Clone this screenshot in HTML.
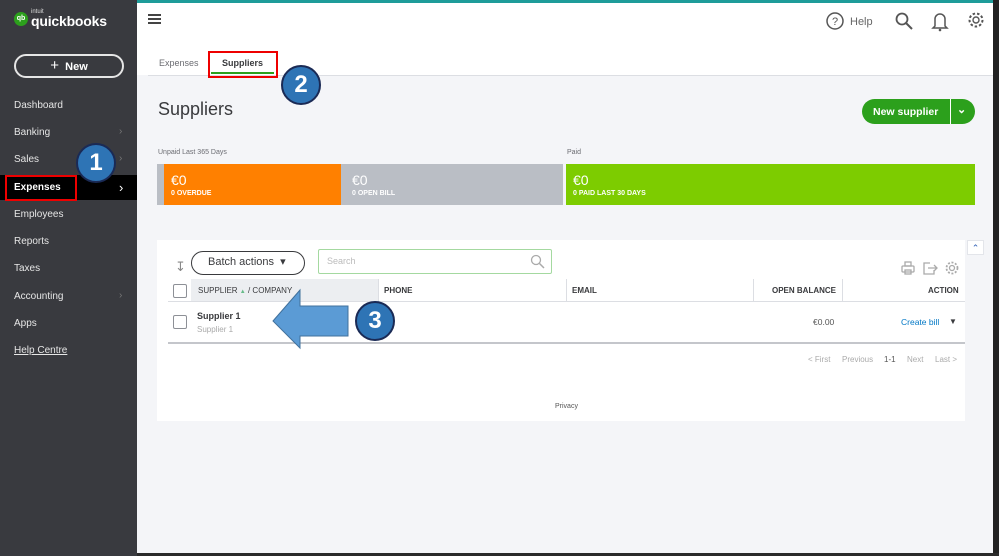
<!DOCTYPE html>
<html><head><meta charset="utf-8"><style>
*{margin:0;padding:0;box-sizing:border-box}
body{width:999px;height:556px;overflow:hidden;background:#f4f5f8;font-family:"Liberation Sans",sans-serif;position:relative;color:#393a3d}
.a{position:absolute}
.side{left:0;top:0;width:137px;height:556px;background:#393a3f}
.nav{left:14px;font-size:10px;color:#e6e6e6}
.chev{left:119px;font-size:10px;color:#777}
.circ{width:40px;height:40px;border-radius:50%;background:#2e74b5;border:2.5px solid #1a2a55;color:#fff;font-weight:bold;font-size:24px;text-align:center;line-height:35px}
.th{font-size:8px;font-weight:bold;color:#393a3d;top:286px}
.pg{font-size:8px;color:#aaa;top:355px}
</style></head><body>
<div class="a" style="left:0;top:0;width:999px;height:3px;background:#1e9c9a"></div>
<div class="a" style="left:137px;top:3px;width:856px;height:72px;background:#fff"></div>
<div class="a" style="left:148px;top:75px;width:845px;height:1px;background:#dcdee3"></div>
<div class="a" style="left:993px;top:0;width:6px;height:556px;background:#222"></div>
<div class="a" style="left:0;top:553px;width:999px;height:3px;background:#2a2a2a"></div>
<div class="a side"></div>
<div class="a" style="left:14px;top:12px;width:14px;height:14px;border-radius:50%;background:#2ca01c;color:#fff;font-size:7px;font-weight:bold;text-align:center;line-height:14px">qb</div>
<div class="a" style="left:31px;top:9px;font-size:6px;color:#ddd">intuit</div>
<div class="a" style="left:31px;top:13px;font-size:14px;color:#fff;font-weight:bold;letter-spacing:-.2px">quickbooks</div>
<div class="a" style="left:14px;top:54px;width:110px;height:24px;border:2px solid #e6e6e6;border-radius:12px;color:#fff;font-size:11px;font-weight:bold;text-align:center;line-height:20px"><span style="font-size:15px;font-weight:normal">+</span>&nbsp; New</div>
<div class="a nav" style="top:100px">Dashboard</div>
<div class="a nav" style="top:127px">Banking</div><div class="a chev" style="top:126px">›</div>
<div class="a nav" style="top:154px">Sales</div><div class="a chev" style="top:153px">›</div>
<div class="a" style="left:0;top:175px;width:137px;height:25px;background:#000"></div>
<div class="a nav" style="top:182px;color:#fff;font-weight:bold">Expenses</div><div class="a chev" style="top:180px;color:#fff;font-size:13px">›</div>
<div class="a" style="left:5px;top:175px;width:72px;height:26px;border:2px solid #e00"></div>
<div class="a nav" style="top:209px">Employees</div>
<div class="a nav" style="top:236px">Reports</div>
<div class="a nav" style="top:263px">Taxes</div>
<div class="a nav" style="top:291px">Accounting</div><div class="a chev" style="top:290px">›</div>
<div class="a nav" style="top:318px">Apps</div>
<div class="a nav" style="top:345px;text-decoration:underline">Help Centre</div>
<div class="a circ" style="left:76px;top:143px">1</div>
<!-- header -->
<div class="a" style="left:148px;top:14px;width:13px;height:2px;background:#444;box-shadow:0 4px 0 #444,0 8px 0 #444"></div>
<svg class="a" style="left:826px;top:10px" width="162" height="22" viewBox="0 0 162 22">
<circle cx="9" cy="11" r="8" fill="none" stroke="#555" stroke-width="1.5"/><text x="9" y="15" font-size="11" text-anchor="middle" fill="#555" font-family="Liberation Sans">?</text>
<text x="24" y="15" font-size="11" fill="#666" font-family="Liberation Sans">Help</text>
<circle cx="76" cy="9" r="5.5" fill="none" stroke="#555" stroke-width="1.8"/><line x1="80" y1="13" x2="86" y2="19" stroke="#555" stroke-width="2"/>
<path d="M109 16 L109 9 A5 5 0 0 1 119 9 L119 16 L121 18 L107 18 Z" fill="none" stroke="#555" stroke-width="1.5"/><circle cx="114" cy="20" r="1.3" fill="#555"/>
<circle cx="150" cy="10" r="3" fill="none" stroke="#555" stroke-width="1.4"/><circle cx="150" cy="10" r="6.5" fill="none" stroke="#555" stroke-width="2" stroke-dasharray="2.5 2"/>
</svg>
<div class="a" style="left:159px;top:58px;font-size:9px;color:#6b6c72">Expenses</div>
<div class="a" style="left:222px;top:58px;font-size:9px;font-weight:bold;color:#393a3d">Suppliers</div>
<div class="a" style="left:211px;top:72px;width:63px;height:2px;background:#2ca01c"></div>
<div class="a" style="left:208px;top:51px;width:70px;height:27px;border:2px solid #e00"></div>
<div class="a circ" style="left:281px;top:65px">2</div>
<div class="a" style="left:158px;top:99px;font-size:18px;color:#393a3d">Suppliers</div>
<div class="a" style="left:862px;top:99px;width:113px;height:25px;border-radius:13px;background:#2ca01c"></div>
<div class="a" style="left:873px;top:106px;font-size:10.5px;font-weight:bold;color:#fff">New supplier</div>
<div class="a" style="left:950px;top:99px;width:1px;height:25px;background:#fff"></div>
<div class="a" style="left:957px;top:103px;font-size:11px;font-weight:bold;color:#fff">⌄</div>
<div class="a" style="left:158px;top:149px;font-size:7px;color:#6b6c72">Unpaid Last 365 Days</div>
<div class="a" style="left:567px;top:149px;font-size:7px;color:#6b6c72">Paid</div>
<div class="a" style="left:157px;top:164px;width:7px;height:41px;background:#babec5"></div>
<div class="a" style="left:164px;top:164px;width:177px;height:41px;background:#ff8000"></div>
<div class="a" style="left:341px;top:164px;width:222px;height:41px;background:#babec5"></div>
<div class="a" style="left:566px;top:164px;width:409px;height:41px;background:#7dcc00"></div>
<div class="a" style="left:171px;top:172px;color:#fff;font-size:14px">€0</div>
<div class="a" style="left:171px;top:190px;color:#fff;font-size:7px;font-weight:bold">0 OVERDUE</div>
<div class="a" style="left:352px;top:172px;color:#fff;font-size:14px">€0</div>
<div class="a" style="left:352px;top:190px;color:#fff;font-size:7px;font-weight:bold">0 OPEN BILL</div>
<div class="a" style="left:573px;top:172px;color:#fff;font-size:14px">€0</div>
<div class="a" style="left:573px;top:190px;color:#fff;font-size:7px;font-weight:bold">0 PAID LAST 30 DAYS</div>
<!-- panel -->
<div class="a" style="left:157px;top:240px;width:808px;height:181px;background:#fff"></div>
<div class="a" style="left:967px;top:240px;width:17px;height:15px;background:#fff;border:1px solid #e3e5ea;color:#2e5fb5;font-size:9px;text-align:center;line-height:14px">⌃</div>
<div class="a" style="left:175px;top:259px;font-size:13px;color:#888">↧</div>
<div class="a" style="left:191px;top:251px;width:114px;height:24px;border:1.5px solid #393a3d;border-radius:12px;font-size:11px;color:#393a3d;padding-left:16px;line-height:21px">Batch actions &nbsp;▾</div>
<div class="a" style="left:318px;top:249px;width:234px;height:25px;border:1.5px solid #a4d9a0;border-radius:2px;font-size:9px;color:#bbb;padding-left:8px;line-height:22px">Search</div>
<svg class="a" style="left:530px;top:254px" width="16" height="16"><circle cx="6" cy="6" r="4.5" fill="none" stroke="#aaa" stroke-width="1.3"/><line x1="9.5" y1="9.5" x2="14" y2="14" stroke="#aaa" stroke-width="1.5"/></svg>
<svg class="a" style="left:900px;top:260px" width="60" height="16" stroke="#aaa" fill="none" stroke-width="1.3"><rect x="2" y="6" width="12" height="6" rx="1"/><rect x="5" y="2" width="6" height="4"/><rect x="5" y="10" width="6" height="4"/><path d="M30 3 H24 V14 H34 V10 M28 8 H37 M34 5 L37 8 L34 11"/><circle cx="52" cy="8" r="2.5"/><circle cx="52" cy="8" r="5.5" stroke-dasharray="2 1.6" stroke-width="1.8"/></svg>
<div class="a" style="left:191px;top:279px;width:188px;height:22px;background:#eceef1"></div>
<div class="a" style="left:168px;top:301px;width:797px;height:1px;background:#dcdee3"></div>
<div class="a" style="left:173px;top:284px;width:14px;height:14px;border:1px solid #8d9096;border-radius:2px;background:#fff"></div>
<div class="a th" style="left:198px;font-weight:normal;color:#393a3d">SUPPLIER <span style="font-size:6px;color:#6b8;">▲</span> / COMPANY</div>
<div class="a" style="left:378px;top:279px;width:1px;height:22px;background:#dcdee3"></div>
<div class="a th" style="left:384px">PHONE</div>
<div class="a" style="left:566px;top:279px;width:1px;height:22px;background:#dcdee3"></div>
<div class="a th" style="left:572px">EMAIL</div>
<div class="a" style="left:753px;top:279px;width:1px;height:22px;background:#dcdee3"></div>
<div class="a th" style="left:772px">OPEN BALANCE</div>
<div class="a" style="left:842px;top:279px;width:1px;height:22px;background:#dcdee3"></div>
<div class="a th" style="left:928px">ACTION</div>
<div class="a" style="left:173px;top:315px;width:14px;height:14px;border:1px solid #8d9096;border-radius:2px"></div>
<div class="a" style="left:197px;top:311px;font-size:9px;font-weight:bold">Supplier 1</div>
<div class="a" style="left:197px;top:325px;font-size:8px;color:#aaa">Supplier 1</div>
<div class="a" style="left:813px;top:317px;font-size:8.5px;color:#555">€0.00</div>
<div class="a" style="left:901px;top:317px;font-size:8.5px;color:#0077c5">Create bill</div>
<div class="a" style="left:949px;top:317px;font-size:8px;color:#393a3d">▼</div>
<div class="a" style="left:168px;top:342px;width:797px;height:1.5px;background:#c4c6cb"></div>
<div class="a pg" style="left:808px">&lt; First</div>
<div class="a pg" style="left:842px">Previous</div>
<div class="a pg" style="left:884px;color:#555">1-1</div>
<div class="a pg" style="left:907px">Next</div>
<div class="a pg" style="left:935px">Last &gt;</div>
<div class="a" style="left:555px;top:403px;font-size:7px;color:#555">Privacy</div>
<svg class="a" style="left:270px;top:286px" width="82" height="64"><path d="M3 35 L30 4 L30 20 L78 20 L78 50 L30 50 L30 62 Z" fill="#5b9bd5" stroke="#41719c" stroke-width="1"/></svg>
<div class="a circ" style="left:355px;top:301px">3</div>
</body></html>
